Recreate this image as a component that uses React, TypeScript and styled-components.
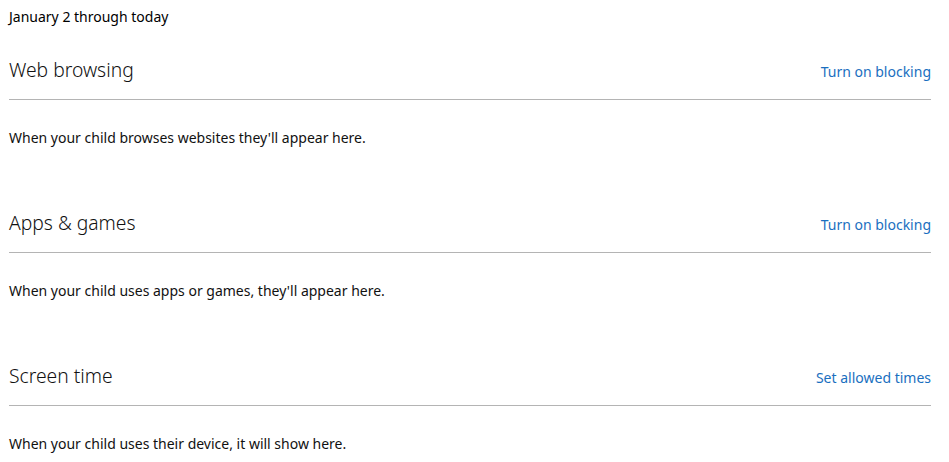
import React from "react";
import styled, { createGlobalStyle } from "styled-components";

const Global = createGlobalStyle`
  html, body { margin: 0; padding: 0; background: #ffffff; }
  body { font-family: "Segoe UI", "Noto Sans", "Open Sans", sans-serif; color: #000; }
`;

const Page = styled.div`
  width: 949px;
  box-sizing: border-box;
  padding: 7px 18px 0 9px;
`;

const Range = styled.div`
  font-size: 14px;
  line-height: 20px;
  height: 20px;
`;

const Section = styled.section<{ $first?: boolean }>`
  margin-top: ${(p) => (p.$first ? 29 : 61)}px;
`;

const HeaderRow = styled.div`
  display: flex;
  justify-content: space-between;
  align-items: baseline;
  height: 28px;
  padding-bottom: 15px;
  border-bottom: 1px solid #b4b4b4;
`;

const Title = styled.h2`
  margin: 0;
  font-size: 19.3px;
  font-weight: 300;
  line-height: 28px;
  color: #111;
`;

const Action = styled.a`
  font-size: 14px;
  line-height: 28px;
  color: #1a6fc0;
  text-decoration: none;
  cursor: pointer;
`;

const Empty = styled.p`
  margin: 28px 0 0;
  font-size: 14px;
  line-height: 20px;
  color: #111;
`;

const sections = [
  { title: "Web browsing", action: "Turn on blocking", text: "When your child browses websites they'll appear here." },
  { title: "Apps & games", action: "Turn on blocking", text: "When your child uses apps or games, they'll appear here." },
  { title: "Screen time", action: "Set allowed times", text: "When your child uses their device, it will show here." },
];

export default function App() {
  return (
    <>
      <Global />
      <Page>
        <Range>January 2 through today</Range>
        {sections.map((s, i) => (
          <Section key={s.title} $first={i === 0}>
            <HeaderRow>
              <Title>{s.title}</Title>
              <Action>{s.action}</Action>
            </HeaderRow>
            <Empty>{s.text}</Empty>
          </Section>
        ))}
      </Page>
    </>
  );
}
